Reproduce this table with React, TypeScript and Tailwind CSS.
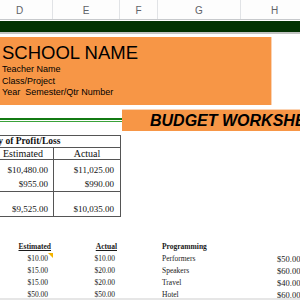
import React from "react";

const lower = [
  ["$10.00", "$10.00", "Performers", "$50.00"],
  ["$15.00", "$20.00", "Speakers", "$60.00"],
  ["$15.00", "$20.00", "Travel", "$40.00"],
  ["$50.00", "$50.00", "Hotel", "$60.00"],
];

export default function App() {
  return (
    <div className="relative w-[300px] h-[300px] overflow-hidden bg-white font-['Liberation_Sans',sans-serif] text-black">
      {/* column header */}
      <div className="flex h-[20px] -ml-[13px] border-b border-[#c7c9cc] bg-[#fdfdfd] text-[10px] text-[#5f6368]">
        <div className="w-[66px] shrink-0 flex items-center justify-center border-r border-[#e1e3e6] pt-[1px]">D</div>
        <div className="w-[67px] shrink-0 flex items-center justify-center border-r border-[#e1e3e6] pt-[1px]">E</div>
        <div className="w-[38px] shrink-0 flex items-center justify-center border-r border-[#e1e3e6] pt-[1px]">F</div>
        <div className="w-[83px] shrink-0 flex items-center justify-center border-r border-[#e1e3e6] pt-[1px]">G</div>
        <div className="w-[68px] shrink-0 flex items-center justify-center border-r border-[#e1e3e6] pt-[1px]">H</div>
      </div>
      <div className="h-[1px]" />
      <div className="h-[11px] bg-[#023302]" />
      <div className="h-[2px] bg-[#c2c4c2]" />
      <div className="h-[3px]" />
      {/* orange school box */}
      <div className="h-[68px] w-[272px] bg-[#f79646] border-r border-[#fbd3b3] pl-[2px] pt-[5px]">
        <div className="text-[18.5px] leading-[22px]">SCHOOL NAME</div>
        <div className="text-[9px] leading-[11.5px]">Teacher Name</div>
        <div className="text-[9px] leading-[11.5px]">Class/Project</div>
        <div className="text-[9px] leading-[11.5px] whitespace-pre">Year  Semester/Qtr Number</div>
      </div>
      <div className="h-[4px]" />
      {/* budget row */}
      <div className="flex h-[22px]">
        <div className="w-[122px] shrink-0 pt-[9px]">
          <div className="h-[2px] bg-[#137a13]" />
          <div className="h-[1px] bg-white" />
          <div className="h-[1px] bg-[#3aa23a]" />
        </div>
        <div className="flex-1 border-t border-[#fbd3b3] bg-[#f79646] pl-[28px] flex items-center">
          <span className="text-[16px] font-bold italic whitespace-nowrap leading-none">BUDGET WORKSHEET</span>
        </div>
      </div>
      <div className="h-[4px]" />
      {/* profit/loss table */}
      <div className="-ml-[40px] w-[161px] border border-[#555] font-['Liberation_Serif',serif] text-[#111]">
        <div className="h-[12px] border-b border-[#555] pl-[2px] flex items-center">
          <span className="text-[9.5px] font-bold whitespace-nowrap leading-none">Summary of Profit/Loss</span>
        </div>
        <div className="flex h-[12px] border-b border-[#555] text-[10px] leading-none">
          <div className="w-[93px] border-r border-[#555] flex items-center justify-end pr-[10px]">Estimated</div>
          <div className="flex-1 flex items-center justify-center">Actual</div>
        </div>
        <div className="flex text-[9px] leading-[11px]">
          <div className="w-[93px] border-r border-[#555]">
            <div className="h-[17px] flex items-end justify-end pr-[5px] pb-[1px]">$10,480.00</div>
            <div className="h-[15px] flex items-end justify-end pr-[5px] pb-[1px] border-b border-[#555]">$955.00</div>
            <div className="h-[24px] flex items-end justify-end pr-[5px] pb-[1px]">$9,525.00</div>
          </div>
          <div className="flex-1">
            <div className="h-[17px] flex items-end justify-end pr-[6px] pb-[1px]">$11,025.00</div>
            <div className="h-[15px] flex items-end justify-end pr-[6px] pb-[1px] border-b border-[#555]">$990.00</div>
            <div className="h-[24px] flex items-end justify-end pr-[6px] pb-[1px]">$10,035.00</div>
          </div>
        </div>
      </div>
      <div className="h-[24px]" />
      {/* lower section */}
      <div className="font-['Liberation_Serif',serif] text-[#1a1a1a]">
        <div className="flex h-[12px] items-center text-[7.5px] font-bold leading-none">
          <div className="w-[53px] shrink-0 text-right pr-[2px] underline">Estimated</div>
          <div className="w-[67px] shrink-0 text-right pr-[3px] underline">Actual</div>
          <div className="w-[38px] shrink-0" />
          <div className="w-[83px] shrink-0 pl-[4px]">Programming</div>
        </div>
        {lower.map((r, i) => (
          <div key={i} className="flex h-[12px] items-center text-[7.5px] leading-none">
            <div className="relative w-[53px] h-full shrink-0 flex items-center justify-end pr-[5px]">
              {r[0]}
              {i === 0 && (
                <div className="absolute top-0 right-0 w-0 h-0 border-t-[5px] border-l-[5px] border-t-[#f4b400] border-l-transparent" />
              )}
            </div>
            <div className="w-[67px] shrink-0 text-right pr-[5px]">{r[1]}</div>
            <div className="w-[38px] shrink-0" />
            <div className="w-[83px] shrink-0 pl-[4px]">{r[2]}</div>
            <div className="w-[36px] shrink-0" />
            <div className="shrink-0 text-[8.5px] whitespace-nowrap">{r[3]}</div>
          </div>
        ))}
      </div>
      <div className="absolute left-0 bottom-0 w-full h-[2px] bg-[#e6e6e6]" />
    </div>
  );
}
